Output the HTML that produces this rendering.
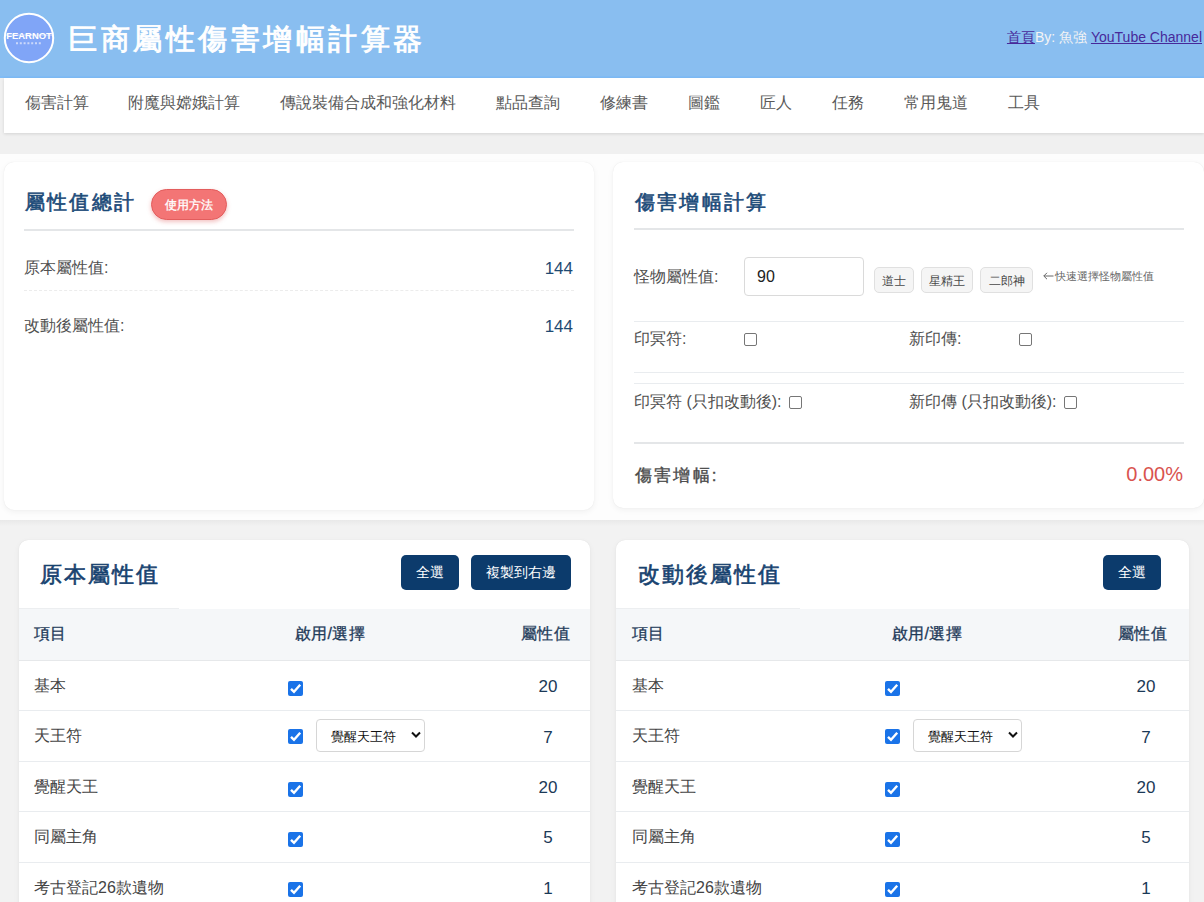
<!DOCTYPE html>
<html><head><meta charset="utf-8">
<style>
*{box-sizing:border-box}
html,body{margin:0;padding:0;width:1204px;height:902px;overflow:hidden;font-family:"Liberation Sans",sans-serif;background:linear-gradient(#f0f0f0 0,#f0f0f0 520px,#e9e9e9 520px,#f2f2f2 526px,#f2f2f2 100%);position:relative}
.abs{position:absolute;white-space:nowrap}
#hdr{position:absolute;left:0;top:0;width:1204px;height:78px;background:#89bef0;border-bottom:2px solid #80bcf6}
#logo{position:absolute;left:4px;top:13px;width:50px;height:50px;border-radius:50%;border:2px solid #fff;background:#7f9ff3;overflow:hidden}
#title{position:absolute;left:68px;top:19px;font-size:29px;letter-spacing:3.5px;-webkit-text-stroke:0.9px #fff;color:#fff;line-height:40px}
#links{position:absolute;right:2px;top:27px;font-size:14px;line-height:20px;color:#f4f4f4}
#links a{color:#47299a;text-decoration:underline}
#nav{position:absolute;left:4px;top:78px;width:1200px;height:55px;background:#fff;box-shadow:0 1px 3px rgba(0,0,0,.12)}
#nav span{position:absolute;top:13px;font-size:16px;line-height:24px;color:#5a5a5a}
#top{position:absolute;left:0;top:154px;width:1204px;height:366px;background:#fdfdfd}
.card{position:absolute;background:#fff;border-radius:10px;box-shadow:0 0 1px rgba(0,0,0,.10),0 2px 6px rgba(0,0,0,.05)}
.ctitle{position:absolute;font-size:20px;font-weight:normal;-webkit-text-stroke:0.6px #1b4a78;letter-spacing:2.2px;color:#1b4a78;line-height:30px}
.hline{position:absolute;height:2px;background:#e4e6e8}
.lbl{position:absolute;font-size:16px;color:#505050;line-height:22px}
.val{position:absolute;font-size:17px;color:#1e4a72;line-height:22px;text-align:right}
.cb{position:absolute;width:13px;height:13px;border:1px solid #767676;border-radius:2px;background:#fff}
.cbc{position:absolute;width:15px;height:15px;border-radius:2px;background:#1a73e8}
.cbc svg{position:absolute;left:0;top:0}
.btn{position:absolute;background:#0c3b6c;color:#fff;border-radius:5px;font-size:14px;text-align:center;line-height:35px;height:35px}
.th{position:absolute;font-size:16px;-webkit-text-stroke:0.3px #1f3b5a;color:#1f3b5a;line-height:22px;letter-spacing:0.3px}
.td{position:absolute;font-size:16px;color:#444;line-height:22px}
.tv{position:absolute;font-size:17px;color:#1b3957;line-height:22px;text-align:center;width:60px}
.rl{position:absolute;height:1px;background:#e9ecef}
.sel{position:absolute;width:109px;height:33px;border:1px solid #d6d6d6;border-radius:4px;background:#fff;font-size:12px;color:#222}
.qb{position:absolute;height:26px;border:1px solid #e0e0e0;border-radius:5px;background:#f5f5f5;font-size:12px;color:#484848;line-height:26px;text-align:center}
</style></head><body>

<div id="hdr">
  <svg class="abs" style="left:3px;top:12px" width="52" height="52" viewBox="0 0 52 52"><circle cx="26" cy="26" r="24.2" fill="#80a5f7" stroke="#fff" stroke-width="2"/><text x="3.3" y="27" font-family="Liberation Sans" font-weight="bold" font-size="9.6" fill="#fff" textLength="45.5" lengthAdjust="spacingAndGlyphs">FEARNOT</text><rect x="3" y="22.6" width="46" height="0.9" fill="#fff" opacity=".6"/><line x1="13" y1="31.2" x2="39.5" y2="31.2" stroke="#e4eafc" stroke-width="2" stroke-dasharray="2 1.8" opacity=".75"/></svg>
  <div id="title">巨商屬性傷害增幅計算器</div>
  <div id="links"><a>首頁</a>By: 魚強 <a>YouTube Channel</a></div>
</div>

<div id="nav">
  <span style="left:21px">傷害計算</span>
  <span style="left:124px">附魔與嫦娥計算</span>
  <span style="left:276px">傳說裝備合成和強化材料</span>
  <span style="left:492px">點品查詢</span>
  <span style="left:596px">修練書</span>
  <span style="left:684px">圖鑑</span>
  <span style="left:756px">匠人</span>
  <span style="left:828px">任務</span>
  <span style="left:900px">常用鬼道</span>
  <span style="left:1004px">工具</span>
</div>

<div id="top">
  <div class="card" style="left:4px;top:8px;width:590px;height:348px"></div>
  <div class="card" style="left:613px;top:8px;width:591px;height:346px"></div>
</div>

<!-- card 1 -->
<div class="ctitle abs" style="left:25px;top:187px">屬性值總計</div>
<div class="abs" style="left:151px;top:189px;width:76px;height:31px;border-radius:16px;background:#f37575;border:1.5px solid #e35d5d;box-shadow:0 2px 4px rgba(220,80,80,.35);color:#fff;font-size:12px;-webkit-text-stroke:0.3px #fff;text-align:center;line-height:30px">使用方法</div>
<div class="hline" style="left:24px;top:229px;width:550px"></div>
<div class="lbl abs" style="left:24px;top:257px">原本屬性值:</div>
<div class="val abs" style="left:473px;top:258px;width:100px">144</div>
<div class="abs" style="left:24px;top:290px;width:550px;border-top:1px dashed #ececec"></div>
<div class="lbl abs" style="left:24px;top:315px">改動後屬性值:</div>
<div class="val abs" style="left:473px;top:316px;width:100px">144</div>

<!-- card 2 -->
<div class="ctitle abs" style="left:635px;top:187px">傷害增幅計算</div>
<div class="hline" style="left:634px;top:228px;width:550px"></div>
<div class="lbl abs" style="left:634px;top:266px">怪物屬性值:</div>
<div class="abs" style="left:744px;top:257px;width:120px;height:39px;border:1px solid #dadada;border-radius:4px;background:#fff;font-size:16px;color:#222;line-height:37px;padding-left:12px">90</div>
<div class="qb" style="left:874px;top:267px;width:40px">道士</div>
<div class="qb" style="left:921px;top:267px;width:52px">星精王</div>
<div class="qb" style="left:980px;top:267px;width:53px">二郎神</div>
<svg class="abs" style="left:1043px;top:272px" width="11" height="8" viewBox="0 0 11 8"><path d="M0.8 4 H10.5 M4 0.8 L0.8 4 L4 7.2" stroke="#666" stroke-width="1" fill="none"/></svg><div class="abs" style="left:1055px;top:268px;font-size:11px;color:#666;line-height:16px">快速選擇怪物屬性值</div>
<div class="rl" style="left:634px;top:321px;width:550px"></div>
<div class="lbl abs" style="left:634px;top:328px">印冥符:</div>
<div class="cb" style="left:744px;top:333px"></div>
<div class="lbl abs" style="left:909px;top:328px">新印傳:</div>
<div class="cb" style="left:1019px;top:333px"></div>
<div class="rl" style="left:634px;top:372px;width:550px"></div>
<div class="rl" style="left:634px;top:383px;width:550px"></div>
<div class="lbl abs" style="left:634px;top:391px">印冥符 (只扣改動後):</div>
<div class="cb" style="left:789px;top:396px"></div>
<div class="lbl abs" style="left:909px;top:391px">新印傳 (只扣改動後):</div>
<div class="cb" style="left:1064px;top:396px"></div>
<div class="hline" style="left:634px;top:442px;width:550px"></div>
<div class="abs" style="left:635px;top:463px;font-size:17px;-webkit-text-stroke:0.35px #4a4a4a;letter-spacing:2.2px;color:#4a4a4a;line-height:26px">傷害增幅:</div>
<div class="abs" style="left:1083px;top:461px;width:100px;text-align:right;font-size:20px;color:#d9534f;line-height:26px">0.00%</div>

<!-- bottom cards -->
<div class="card" style="left:19px;top:540px;width:571px;height:400px;border-radius:9px"></div>
<div class="card" style="left:616px;top:540px;width:573px;height:400px;border-radius:9px"></div>
<div class="ctitle abs" style="left:40px;top:560px;font-size:21.5px;letter-spacing:2px;line-height:30px;color:#17426f;-webkit-text-stroke:0.6px #17426f">原本屬性值</div>
<div class="btn abs" style="left:401px;top:555px;width:58px">全選</div>
<div class="btn abs" style="left:471px;top:555px;width:100px">複製到右邊</div>
<div class="abs" style="left:19px;top:609px;width:571px;height:51px;background:#f5f7f9"></div>
<div class="abs" style="left:19px;top:608px;width:160px;height:1px;background:#eceef0"></div>
<div class="rl" style="left:19px;top:660px;width:571px;background:#e6e8ea"></div>
<div class="th abs" style="left:34px;top:623px">項目</div>
<div class="th abs" style="left:295px;top:623px">啟用/選擇</div>
<div class="th abs" style="left:521px;top:623px">屬性值</div>
<div class="td abs" style="left:34px;top:675px">基本</div>
<div class="cbc" style="left:288px;top:681px"><svg width="15" height="15" viewBox="0 0 15 15"><path d="M3 7.8 L6 10.8 L12.2 3.8" stroke="#fff" stroke-width="2.4" fill="none"/></svg></div>
<div class="tv abs" style="left:518px;top:676px">20</div>
<div class="rl" style="left:19px;top:710px;width:571px"></div>
<div class="td abs" style="left:34px;top:725px">天王符</div>
<div class="cbc" style="left:288px;top:729px"><svg width="15" height="15" viewBox="0 0 15 15"><path d="M3 7.8 L6 10.8 L12.2 3.8" stroke="#fff" stroke-width="2.4" fill="none"/></svg></div>
<div class="sel" style="left:316px;top:719px"><span class="abs" style="left:14px;top:8px;line-height:18px;font-size:13px;color:#111">覺醒天王符</span><svg class="abs" style="left:94px;top:11px" width="10" height="8" viewBox="0 0 10 8"><path d="M1 1.5 L5 5.5 L9 1.5" stroke="#111" stroke-width="2" fill="none"/></svg></div>
<div class="tv abs" style="left:518px;top:727px">7</div>
<div class="rl" style="left:19px;top:761px;width:571px"></div>
<div class="td abs" style="left:34px;top:776px">覺醒天王</div>
<div class="cbc" style="left:288px;top:782px"><svg width="15" height="15" viewBox="0 0 15 15"><path d="M3 7.8 L6 10.8 L12.2 3.8" stroke="#fff" stroke-width="2.4" fill="none"/></svg></div>
<div class="tv abs" style="left:518px;top:777px">20</div>
<div class="rl" style="left:19px;top:811px;width:571px"></div>
<div class="td abs" style="left:34px;top:826px">同屬主角</div>
<div class="cbc" style="left:288px;top:832px"><svg width="15" height="15" viewBox="0 0 15 15"><path d="M3 7.8 L6 10.8 L12.2 3.8" stroke="#fff" stroke-width="2.4" fill="none"/></svg></div>
<div class="tv abs" style="left:518px;top:827px">5</div>
<div class="rl" style="left:19px;top:862px;width:571px"></div>
<div class="td abs" style="left:34px;top:877px">考古登記26款遺物</div>
<div class="cbc" style="left:288px;top:882px"><svg width="15" height="15" viewBox="0 0 15 15"><path d="M3 7.8 L6 10.8 L12.2 3.8" stroke="#fff" stroke-width="2.4" fill="none"/></svg></div>
<div class="tv abs" style="left:518px;top:878px">1</div>
<div class="ctitle abs" style="left:638px;top:560px;font-size:21.5px;letter-spacing:2px;line-height:30px;color:#17426f;-webkit-text-stroke:0.6px #17426f">改動後屬性值</div>
<div class="btn abs" style="left:1103px;top:555px;width:58px">全選</div>
<div class="abs" style="left:616px;top:609px;width:573px;height:51px;background:#f5f7f9"></div>
<div class="abs" style="left:616px;top:608px;width:184px;height:1px;background:#eceef0"></div>
<div class="rl" style="left:616px;top:660px;width:573px;background:#e6e8ea"></div>
<div class="th abs" style="left:632px;top:623px">項目</div>
<div class="th abs" style="left:892px;top:623px">啟用/選擇</div>
<div class="th abs" style="left:1118px;top:623px">屬性值</div>
<div class="td abs" style="left:632px;top:675px">基本</div>
<div class="cbc" style="left:885px;top:681px"><svg width="15" height="15" viewBox="0 0 15 15"><path d="M3 7.8 L6 10.8 L12.2 3.8" stroke="#fff" stroke-width="2.4" fill="none"/></svg></div>
<div class="tv abs" style="left:1116px;top:676px">20</div>
<div class="rl" style="left:616px;top:710px;width:573px"></div>
<div class="td abs" style="left:632px;top:725px">天王符</div>
<div class="cbc" style="left:885px;top:729px"><svg width="15" height="15" viewBox="0 0 15 15"><path d="M3 7.8 L6 10.8 L12.2 3.8" stroke="#fff" stroke-width="2.4" fill="none"/></svg></div>
<div class="sel" style="left:913px;top:719px"><span class="abs" style="left:14px;top:8px;line-height:18px;font-size:13px;color:#111">覺醒天王符</span><svg class="abs" style="left:94px;top:11px" width="10" height="8" viewBox="0 0 10 8"><path d="M1 1.5 L5 5.5 L9 1.5" stroke="#111" stroke-width="2" fill="none"/></svg></div>
<div class="tv abs" style="left:1116px;top:727px">7</div>
<div class="rl" style="left:616px;top:761px;width:573px"></div>
<div class="td abs" style="left:632px;top:776px">覺醒天王</div>
<div class="cbc" style="left:885px;top:782px"><svg width="15" height="15" viewBox="0 0 15 15"><path d="M3 7.8 L6 10.8 L12.2 3.8" stroke="#fff" stroke-width="2.4" fill="none"/></svg></div>
<div class="tv abs" style="left:1116px;top:777px">20</div>
<div class="rl" style="left:616px;top:811px;width:573px"></div>
<div class="td abs" style="left:632px;top:826px">同屬主角</div>
<div class="cbc" style="left:885px;top:832px"><svg width="15" height="15" viewBox="0 0 15 15"><path d="M3 7.8 L6 10.8 L12.2 3.8" stroke="#fff" stroke-width="2.4" fill="none"/></svg></div>
<div class="tv abs" style="left:1116px;top:827px">5</div>
<div class="rl" style="left:616px;top:862px;width:573px"></div>
<div class="td abs" style="left:632px;top:877px">考古登記26款遺物</div>
<div class="cbc" style="left:885px;top:882px"><svg width="15" height="15" viewBox="0 0 15 15"><path d="M3 7.8 L6 10.8 L12.2 3.8" stroke="#fff" stroke-width="2.4" fill="none"/></svg></div>
<div class="tv abs" style="left:1116px;top:878px">1</div>
</body></html>
